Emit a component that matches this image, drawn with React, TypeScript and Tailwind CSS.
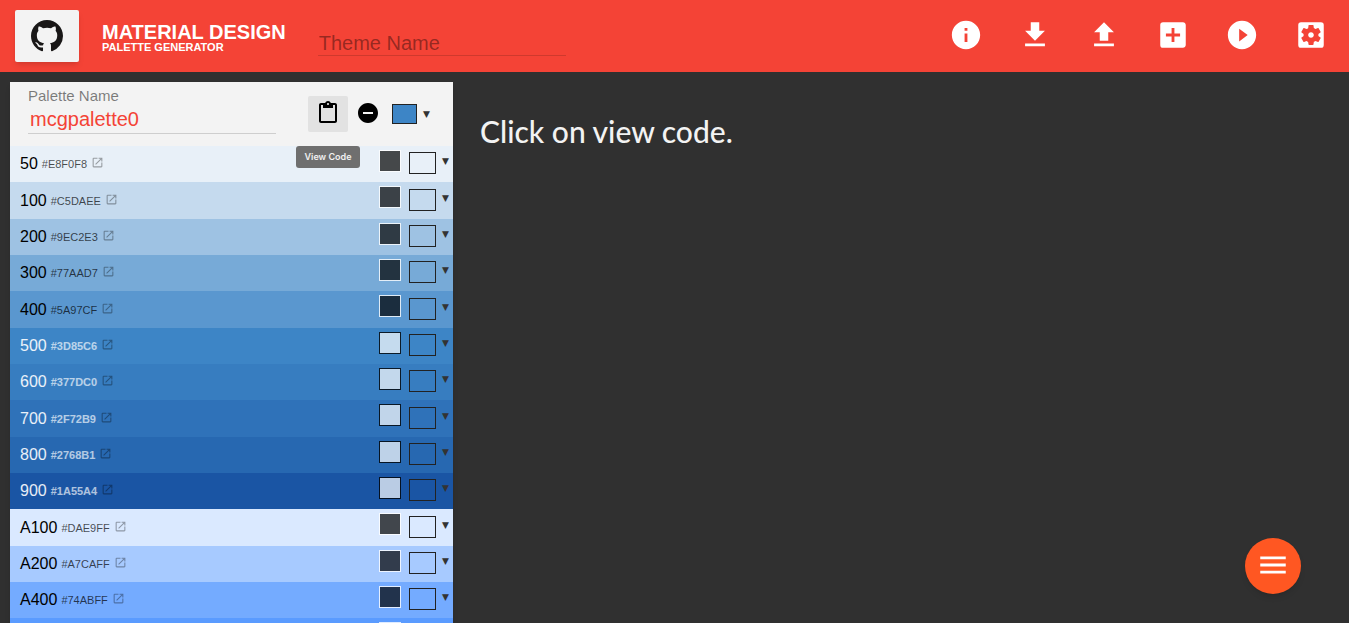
import type { ReactNode } from "react";
import {
  MdAddBox,
  MdContentPaste,
  MdInfo,
  MdMenu,
  MdOpenInNew,
  MdPlayCircleFilled,
  MdRemoveCircle,
  MdSettingsApplications,
} from "react-icons/md";

type Shade = { name: string; hex: string; light: boolean };

const shades: Shade[] = [
  { name: "50", hex: "#E8F0F8", light: false },
  { name: "100", hex: "#C5DAEE", light: false },
  { name: "200", hex: "#9EC2E3", light: false },
  { name: "300", hex: "#77AAD7", light: false },
  { name: "400", hex: "#5A97CF", light: false },
  { name: "500", hex: "#3D85C6", light: true },
  { name: "600", hex: "#377DC0", light: true },
  { name: "700", hex: "#2F72B9", light: true },
  { name: "800", hex: "#2768B1", light: true },
  { name: "900", hex: "#1A55A4", light: true },
  { name: "A100", hex: "#DAE9FF", light: false },
  { name: "A200", hex: "#A7CAFF", light: false },
  { name: "A400", hex: "#74ABFF", light: false },
  { name: "A700", hex: "#5A9BFF", light: false },
];

function GithubMark() {
  return (
    <svg viewBox="0 0 16 16" className="size-8" fill="#191717" aria-hidden="true">
      <path d="M8 0C3.58 0 0 3.58 0 8c0 3.54 2.29 6.53 5.47 7.59.4.07.55-.17.55-.38 0-.19-.01-.82-.01-1.49-2.01.37-2.53-.49-2.69-.94-.09-.23-.48-.94-.82-1.13-.28-.15-.68-.52-.01-.53.63-.01 1.08.58 1.23.82.72 1.21 1.87.87 2.33.66.07-.52.28-.87.51-1.07-1.78-.2-3.64-.89-3.64-3.95 0-.87.31-1.59.82-2.15-.08-.2-.36-1.02.08-2.12 0 0 .67-.21 2.2.82.64-.18 1.32-.27 2-.27.68 0 1.36.09 2 .27 1.53-1.04 2.2-.82 2.2-.82.44 1.1.16 1.92.08 2.12.51.56.82 1.27.82 2.15 0 3.07-1.87 3.75-3.65 3.95.29.25.54.73.54 1.48 0 1.07-.01 1.93-.01 2.2 0 .21.15.46.55.38A8.013 8.013 0 0 0 16 8c0-4.42-3.58-8-8-8z" />
    </svg>
  );
}

function DownloadIcon() {
  return (
    <svg viewBox="0 0 24 24" className="size-[34px]" fill="currentColor" aria-hidden="true">
      <path d="M19 9h-4V3H9v6H5l7 7 7-7zM5 18v2h14v-2H5z" />
    </svg>
  );
}

function UploadIcon() {
  return (
    <svg viewBox="0 0 24 24" className="size-[34px]" fill="currentColor" aria-hidden="true">
      <path d="M9 16h6v-6h4l-7-7-7 7h4v6zm-4 2h14v2H5v-2z" />
    </svg>
  );
}

function ToolButton({ label, children }: { label: string; children: ReactNode }) {
  return (
    <button type="button" aria-label={label} className="text-white">
      {children}
    </button>
  );
}

function Arrow() {
  return <span className="font-['DejaVu_Sans'] text-[9px] leading-4 text-[#333]">▼</span>;
}

function ShadeRow({ shade }: { shade: Shade }) {
  return (
    <li
      className="flex h-9 items-end justify-between pr-[3px] pl-[10px] nth-[3n+2]:h-[37px]"
      style={{ backgroundColor: shade.hex }}
    >
      <div className="flex h-9 items-center gap-1">
        <span className={shade.light ? "text-base text-white/90" : "text-base text-black"}>
          {shade.name}
        </span>
        <span
          className={
            shade.light ? "text-[11px] font-bold text-white/65" : "text-[11px] text-black/70"
          }
        >
          {shade.hex}
        </span>
        <a href="#details" aria-label={`Open ${shade.name}`} className="pb-1 text-black/35">
          <MdOpenInNew className="size-[13px]" />
        </a>
      </div>
      <div className="flex h-full gap-2">
        <button
          type="button"
          aria-label={`Contrast of ${shade.name}`}
          className={
            shade.light
              ? "mt-1 size-[22px] border border-black/80 bg-white/70 bg-clip-padding"
              : "mt-1 size-[22px] border border-white/80 bg-black/70 bg-clip-padding"
          }
        />
        <button
          type="button"
          aria-label={`Colour of ${shade.name}`}
          className="flex items-center gap-[6px] self-end pb-2"
        >
          <span className="h-[22px] w-[27px] border border-[#222]" />
          <span className="flex w-2 pb-1">
            <Arrow />
          </span>
        </button>
      </div>
    </li>
  );
}

export default function App() {
  return (
    <div className="flex h-screen flex-col overflow-hidden border-r border-white bg-[#303030] font-['Liberation_Sans',sans-serif]">
      <header className="flex h-[72px] shrink-0 items-center bg-[#f44336] pr-[21px] pl-[15px]">
        <a
          href="#github"
          aria-label="GitHub"
          className="flex h-[52px] w-16 items-center justify-center rounded-xs bg-[#f3f3f3] shadow-md"
        >
          <GithubMark />
        </a>
        <h1 className="ml-[23px] flex flex-col pt-[2px] font-bold whitespace-nowrap text-white">
          <span className="text-xl leading-5">MATERIAL DESIGN</span>
          <span className="text-[11px] leading-[10px]">PALETTE GENERATOR</span>
        </h1>
        <input
          type="text"
          aria-label="Theme Name"
          placeholder="Theme Name"
          className="mt-[12px] ml-8 h-7 w-[248px] border-b border-black/15 pt-[2px] pl-px text-xl text-black placeholder:text-black/40 focus:outline-none"
        />
        <nav className="ml-auto flex items-center gap-[35px] pb-[2px]">
          <ToolButton label="About">
            <MdInfo className="size-[34px]" />
          </ToolButton>
          <ToolButton label="Export">
            <DownloadIcon />
          </ToolButton>
          <ToolButton label="Import">
            <UploadIcon />
          </ToolButton>
          <ToolButton label="Add palette">
            <MdAddBox className="size-[34px]" />
          </ToolButton>
          <ToolButton label="Demo">
            <MdPlayCircleFilled className="size-[34px]" />
          </ToolButton>
          <ToolButton label="Settings">
            <MdSettingsApplications className="size-[34px]" />
          </ToolButton>
        </nav>
      </header>

      <main className="flex min-h-0 grow items-start px-[10px] pt-[10px]">
        <section className="w-[443px] shrink-0 shadow-md">
          <div className="flex h-16 bg-[#f3f3f3] pl-[18px]">
            <div className="flex w-[248px] flex-col pt-1">
              <label htmlFor="palette-name" className="text-[15px] leading-5 text-black/50">
                Palette Name
              </label>
              <input
                id="palette-name"
                type="text"
                defaultValue="mcgpalette0"
                className="h-7 border-b border-black/15 pb-[2px] pl-[2px] text-xl text-[#f44336] focus:outline-none"
              />
            </div>
            <div className="relative mt-[14px] ml-8 h-9">
              <button
                type="button"
                aria-label="View Code"
                className="flex h-9 w-10 items-center justify-center rounded-xs bg-[#e2e2e2] pb-[2px]"
              >
                <MdContentPaste className="size-6" />
              </button>
              <span
                role="tooltip"
                className="absolute top-[50px] -left-3 flex h-[22px] w-16 items-center justify-center rounded-[3px] bg-[#6f6f6f] font-['Inter',sans-serif] text-[9px] font-semibold whitespace-nowrap text-white/90"
              >
                View Code
              </span>
            </div>
            <button type="button" aria-label="Remove palette" className="ml-2 h-[62px]">
              <MdRemoveCircle className="size-6" />
            </button>
            <button
              type="button"
              aria-label="Base colour"
              className="ml-3 flex h-16 items-center gap-[6px]"
            >
              <span className="h-5 w-[25px] border border-[#222] bg-[#3d85c6]" />
              <Arrow />
            </button>
          </div>
          <ul>
            {shades.map((shade) => (
              <ShadeRow key={shade.name} shade={shade} />
            ))}
          </ul>
        </section>
        <p className="mt-7 ml-[27px] font-['Lato',sans-serif] text-[30px] leading-[42px] font-medium text-[#f3f3f3]">
          Click on view code.
        </p>
      </main>

      <button
        type="button"
        aria-label="Menu"
        className="fixed right-[49px] bottom-[29px] flex size-14 items-center justify-center rounded-full bg-[#ff5722] pb-[2px] text-white shadow-md"
      >
        <MdMenu className="size-[34px]" />
      </button>
    </div>
  );
}
